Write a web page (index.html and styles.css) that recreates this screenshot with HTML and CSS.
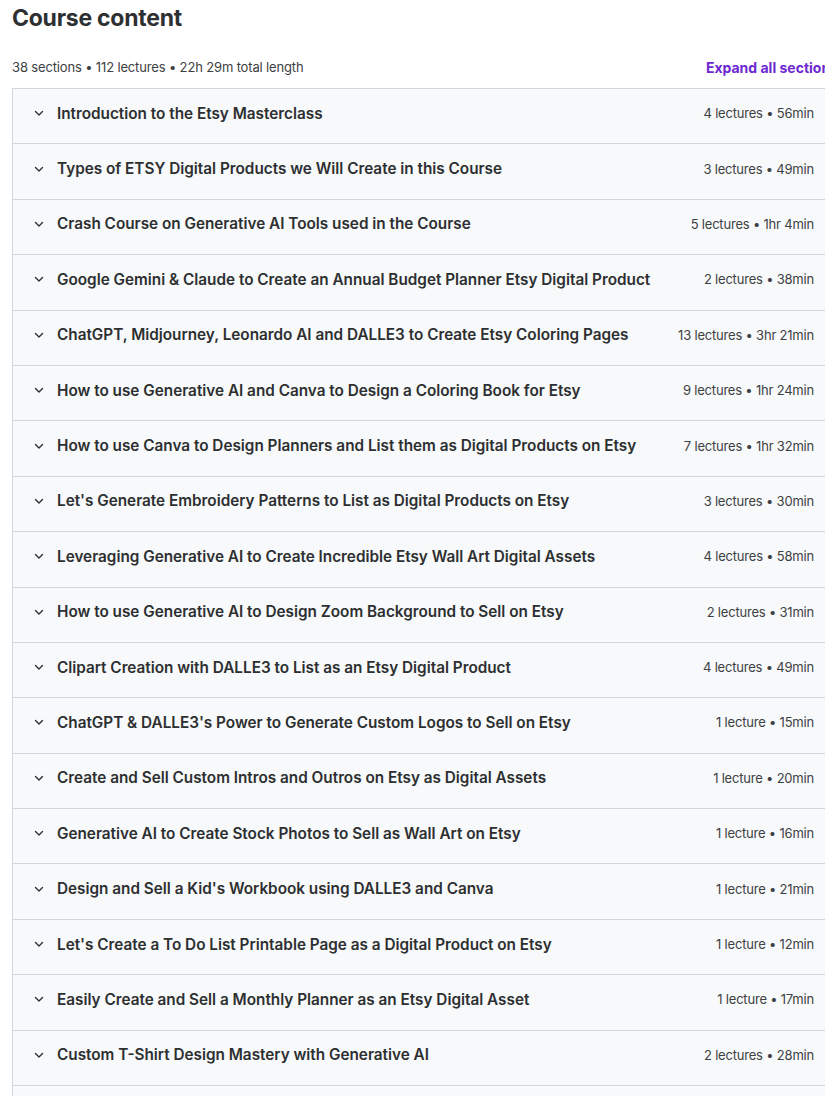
FILE: index.html
```html
<!DOCTYPE html>
<html>
<head>
<meta charset="utf-8">
<link rel="stylesheet" href="styles.css">
</head>
<body>
<div class="page">
  <h2 class="title">Course content</h2>
  <div class="meta-row">
    <span class="meta">38 sections • 112 lectures • 22h 29m total length</span>
    <button class="expand">Expand all sections</button>
  </div>
  <div class="sections" id="sections"></div>
</div>
<script src="app.js"></script>
</body>
</html>
```

FILE: app.js
```js
const data = [
  ["Introduction to the Etsy Masterclass", "4 lectures • 56min"],
  ["Types of ETSY Digital Products we Will Create in this Course", "3 lectures • 49min"],
  ["Crash Course on Generative AI Tools used in the Course", "5 lectures • 1hr 4min"],
  ["Google Gemini & Claude to Create an Annual Budget Planner Etsy Digital Product", "2 lectures • 38min"],
  ["ChatGPT, Midjourney, Leonardo AI and DALLE3 to Create Etsy Coloring Pages", "13 lectures • 3hr 21min"],
  ["How to use Generative AI and Canva to Design a Coloring Book for Etsy", "9 lectures • 1hr 24min"],
  ["How to use Canva to Design Planners and List them as Digital Products on Etsy", "7 lectures • 1hr 32min"],
  ["Let's Generate Embroidery Patterns to List as Digital Products on Etsy", "3 lectures • 30min"],
  ["Leveraging Generative AI to Create Incredible Etsy Wall Art Digital Assets", "4 lectures • 58min"],
  ["How to use Generative AI to Design Zoom Background to Sell on Etsy", "2 lectures • 31min"],
  ["Clipart Creation with DALLE3 to List as an Etsy Digital Product", "4 lectures • 49min"],
  ["ChatGPT & DALLE3's Power to Generate Custom Logos to Sell on Etsy", "1 lecture • 15min"],
  ["Create and Sell Custom Intros and Outros on Etsy as Digital Assets", "1 lecture • 20min"],
  ["Generative AI to Create Stock Photos to Sell as Wall Art on Etsy", "1 lecture • 16min"],
  ["Design and Sell a Kid's Workbook using DALLE3 and Canva", "1 lecture • 21min"],
  ["Let's Create a To Do List Printable Page as a Digital Product on Etsy", "1 lecture • 12min"],
  ["Easily Create and Sell a Monthly Planner as an Etsy Digital Asset", "1 lecture • 17min"],
  ["Custom T-Shirt Design Mastery with Generative AI", "2 lectures • 28min"],
  ["Selling Digital Products on Etsy", "3 lectures • 25min"]
];
const list = document.getElementById("sections");
const chev = '<svg class="chev" width="12" height="12" viewBox="0 0 12 12"><path d="M2.5 4.5 L6 8 L9.5 4.5" fill="none" stroke="#2d2f31" stroke-width="1.4" stroke-linecap="round" stroke-linejoin="round"/></svg>';
for (const [t, s] of data) {
  const row = document.createElement("div");
  row.className = "section";
  row.innerHTML = chev + '<span class="sec-title"></span><span class="sec-stats"></span>';
  row.querySelector(".sec-title").textContent = t;
  row.querySelector(".sec-stats").textContent = s;
  list.appendChild(row);
}
```

FILE: styles.css
```css
html, body {
  margin: 0;
  padding: 0;
  background: #ffffff;
  overflow: hidden;
}
body {
  font-family: Inter, "Noto Sans", sans-serif;
  color: #2d2f31;
}
.page {
  width: 826px;
  padding-left: 12px;
}
.title {
  margin: 0;
  font-size: 23px;
  font-weight: 700;
  line-height: 36px;
  letter-spacing: -0.25px;
}
.meta-row {
  display: flex;
  justify-content: space-between;
  align-items: center;
  margin-top: 20px;
  height: 22px;
  margin-bottom: 10px;
}
.meta {
  font-size: 13px;
  letter-spacing: -0.15px;
  color: #3e4143;
}
.expand {
  border: 0;
  background: none;
  padding: 0;
  font-family: inherit;
  font-size: 14px;
  font-weight: 700;
  color: #6d28d2;
  white-space: nowrap;
}
.sections {
  border-left: 1px solid #d1d7dc;
  border-right: 1px solid #d1d7dc;
}
.section {
  display: flex;
  align-items: center;
  height: 54.4px;
  box-sizing: content-box;
  border-top: 1px solid #d1d7dc;
  background: #f7f9fa;
  padding: 0 23px 0 20px;
}
.section > * {
  position: relative;
  top: -3px;
}
.chev {
  flex: none;
  margin-right: 12px;
}
.sec-title {
  flex: 1;
  font-size: 15.3px;
  font-weight: 600;
  white-space: nowrap;
}
.sec-stats {
  font-size: 13px;
  letter-spacing: -0.2px;
  white-space: nowrap;
  color: #3e4143;
}
```
